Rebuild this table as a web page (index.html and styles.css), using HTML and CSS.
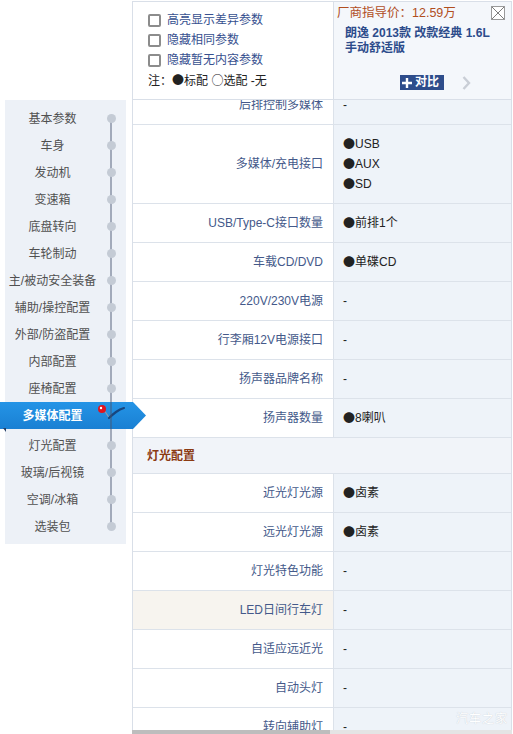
FILE: index.html
```html
<!DOCTYPE html>
<html lang="zh-CN">
<head>
    <meta charset="UTF-8">
    <title>参数配置</title>
    <link rel="stylesheet" href="styles.css">
</head>
<body>
    <nav class="side">
        <ul class="side-list">
            <li class="side-item"><span class="side-text">基本参数</span><i class="dot"></i></li>
            <li class="side-item"><span class="side-text">车身</span><i class="dot"></i></li>
            <li class="side-item"><span class="side-text">发动机</span><i class="dot"></i></li>
            <li class="side-item"><span class="side-text">变速箱</span><i class="dot"></i></li>
            <li class="side-item"><span class="side-text">底盘转向</span><i class="dot"></i></li>
            <li class="side-item"><span class="side-text">车轮制动</span><i class="dot"></i></li>
            <li class="side-item"><span class="side-text">主/被动安全装备</span><i class="dot"></i></li>
            <li class="side-item"><span class="side-text">辅助/操控配置</span><i class="dot"></i></li>
            <li class="side-item"><span class="side-text">外部/防盗配置</span><i class="dot"></i></li>
            <li class="side-item"><span class="side-text">内部配置</span><i class="dot"></i></li>
            <li class="side-item"><span class="side-text">座椅配置</span><i class="dot"></i></li>
            <li class="side-item active">
                <div class="side-band">
                    <span class="side-text">多媒体配置</span>
                    <svg class="pin" width="30" height="20" viewBox="0 0 30 20">
                        <path d="M8 7 L14 16" stroke="#8a98ad" stroke-width="1.2" fill="none"/>
                        <path d="M13 15 Q16 12 20 9 Q24 6 28 5" stroke="#17467f" stroke-width="2.2" fill="none" stroke-linecap="round"/>
                        <circle cx="6" cy="6" r="4" fill="#e0141e"/>
                        <circle cx="5" cy="5" r="1.2" fill="#fff"/>
                    </svg>
                </div>
            </li>
            <li class="side-item"><span class="side-text">灯光配置</span><i class="dot"></i></li>
            <li class="side-item"><span class="side-text">玻璃/后视镜</span><i class="dot"></i></li>
            <li class="side-item"><span class="side-text">空调/冰箱</span><i class="dot"></i></li>
            <li class="side-item"><span class="side-text">选装包</span><i class="dot"></i></li>
        </ul>
    </nav>

    <main class="spec">
        <div class="spec-head">
            <div class="head-opts">
                <label class="opt"><span class="box"></span>高亮显示差异参数</label>
                <label class="opt"><span class="box"></span>隐藏相同参数</label>
                <label class="opt"><span class="box"></span>隐藏暂无内容参数</label>
                <p class="note">注：<span class="b">●</span>标配 <span class="b">○</span>选配 -无</p>
            </div>
            <div class="head-car">
                <div class="price-row">
                    <span class="price">厂商指导价：12.59万</span>
                    <span class="close">
                        <svg width="12" height="12" viewBox="0 0 12 12">
                            <path d="M0 0 L12 12 M12 0 L0 12" stroke="#7d7d7d" stroke-width="1" fill="none"/>
                        </svg>
                    </span>
                </div>
                <p class="car-name">朗逸 2013款 改款经典 1.6L<br>手动舒适版</p>
                <div class="compare-bar">
                    <span class="compare-btn">
                        <svg width="10" height="10" viewBox="0 0 10 10">
                            <path d="M5 0 V10 M0 5 H10" stroke="#fff" stroke-width="2.4"/>
                        </svg>对比</span>
                    <svg class="next" width="9" height="14" viewBox="0 0 9 14">
                        <path d="M1.5 1 L7 7 L1.5 13" stroke="#c9ced6" stroke-width="2.4" fill="none"/>
                    </svg>
                </div>
            </div>
        </div>

        <div class="spec-body">
            <div class="spec-rows">
                <div class="row"><div class="label">后排控制多媒体</div><div class="value">-</div></div>
                <div class="row tall">
                    <div class="label">多媒体/充电接口</div>
                    <div class="value list">
                        <span class="item"><span class="b">●</span>USB</span>
                        <span class="item"><span class="b">●</span>AUX</span>
                        <span class="item"><span class="b">●</span>SD</span>
                    </div>
                </div>
                <div class="row"><div class="label">USB/Type-C接口数量</div><div class="value"><span class="b">●</span>前排1个</div></div>
                <div class="row"><div class="label">车载CD/DVD</div><div class="value"><span class="b">●</span>单碟CD</div></div>
                <div class="row"><div class="label">220V/230V电源</div><div class="value">-</div></div>
                <div class="row"><div class="label">行李厢12V电源接口</div><div class="value">-</div></div>
                <div class="row"><div class="label">扬声器品牌名称</div><div class="value">-</div></div>
                <div class="row"><div class="label">扬声器数量</div><div class="value"><span class="b">●</span>8喇叭</div></div>
                <div class="row section">灯光配置</div>
                <div class="row"><div class="label">近光灯光源</div><div class="value"><span class="b">●</span>卤素</div></div>
                <div class="row"><div class="label">远光灯光源</div><div class="value"><span class="b">●</span>卤素</div></div>
                <div class="row"><div class="label">灯光特色功能</div><div class="value">-</div></div>
                <div class="row"><div class="label hl">LED日间行车灯</div><div class="value">-</div></div>
                <div class="row"><div class="label">自适应远近光</div><div class="value">-</div></div>
                <div class="row"><div class="label">自动头灯</div><div class="value">-</div></div>
                <div class="row"><div class="label">转向辅助灯</div><div class="value">-</div></div>
            </div>
        </div>
        <div class="hscroll"><div class="hscroll-thumb"></div></div>
        <span class="watermark">汽车之家</span>
    </main>
</body>
</html>
```

FILE: styles.css
```css
/* Reset */
* {
    margin: 0;
    padding: 0;
    box-sizing: border-box;
}

body {
    font-family: "Liberation Sans", "Noto Sans CJK SC", sans-serif;
    font-size: 12px;
    line-height: 1.5;
    color: #222;
    background: #fff;
    display: flex;
    align-items: flex-start;
    width: 513px;
    height: 734px;
    overflow: hidden;
}

/* Full-width bullet glyphs */
.b {
    font-family: "Noto Sans CJK SC", sans-serif;
}

/* Left category navigation */
.side {
    position: relative;
    z-index: 5;
    flex-shrink: 0;
    width: 121px;
    margin: 100px 0 0 5px;
    padding: 5px 0 4px;
    background: #edf1f7;
}

.side::before {
    content: "";
    position: absolute;
    left: 105px;
    top: 18px;
    bottom: 18px;
    width: 2px;
    background: rgba(70, 85, 110, 0.45);
    z-index: 2;
}

.side-list {
    list-style: none;
}

.side-item {
    display: flex;
    align-items: center;
    height: 27px;
}

.side-text {
    width: 95px;
    flex-shrink: 0;
    text-align: center;
    color: #505050;
    white-space: nowrap;
}

.dot {
    position: relative;
    z-index: 3;
    flex-shrink: 0;
    width: 9px;
    height: 9px;
    margin-left: 7px;
    border-radius: 50%;
    background: #c4cbd5;
}

.side-item.active {
    position: relative;
    height: 30px;
    align-items: flex-start;
    margin-left: -5px;
}

.side-item.active::after {
    content: "";
    position: absolute;
    left: 3px;
    top: 26px;
    border-top: 4px solid #243f66;
    border-left: 3px solid transparent;
}

.side-band {
    position: relative;
    flex-shrink: 0;
    display: flex;
    align-items: center;
    width: 146px;
    height: 27px;
    padding-left: 5px;
    background: linear-gradient(#2494e6, #1a80d3);
    clip-path: polygon(0 0, 133px 0, 146px 50%, 133px 100%, 0 100%);
}

.side-band .side-text {
    color: #fff;
    font-weight: bold;
}

.pin {
    position: absolute;
    left: 96px;
    top: 1px;
}

/* Spec table */
.spec {
    position: relative;
    flex-shrink: 0;
    width: 380px;
    margin: 1px 0 0 6px;
}

.spec-head {
    display: flex;
    height: 99px;
    border: 1px solid #d9dfe8;
}

.head-opts {
    width: 201px;
    padding: 8px 0 0 15px;
    border-right: 1px solid #d9dfe8;
}

.opt {
    display: flex;
    align-items: center;
    height: 20px;
    color: #36508f;
}

.box {
    width: 13px;
    height: 13px;
    margin-right: 6px;
    border: 2px solid #8c8c8c;
    border-radius: 2px;
    background: #fff;
}

.note {
    line-height: 20px;
    color: #222;
}

.head-car {
    flex: 1;
    padding: 4px 6px 0 3px;
    background: #f4f7fb;
}

.price-row {
    display: flex;
    justify-content: space-between;
    align-items: center;
    height: 14px;
}

.price {
    color: #b14e1e;
    font-size: 12.5px;
}

.close {
    display: flex;
    width: 14px;
    height: 14px;
    border: 1px solid #9a9a9a;
    background: #fff;
}

.car-name {
    margin-top: 6px;
    padding-left: 8px;
    line-height: 15px;
    font-weight: bold;
    color: #2d4c8b;
}

.compare-bar {
    display: flex;
    align-items: center;
    gap: 18px;
    margin-top: 19px;
    padding-left: 63px;
}

.compare-btn {
    display: flex;
    align-items: center;
    gap: 3px;
    height: 15px;
    width: 44px;
    padding-left: 2px;
    background: #2e4d8b;
    color: #fff;
    font-weight: bold;
    line-height: 15px;
}

.spec-body {
    height: 630px;
    overflow: hidden;
    border-left: 1px solid #d9dfe8;
    border-right: 1px solid #d9dfe8;
}

.spec-rows {
    margin-top: -14px;
}

.row {
    display: flex;
    height: 39px;
    border-bottom: 1px solid #dce2ea;
}

.row.tall {
    height: 79px;
}

.label {
    display: flex;
    align-items: center;
    justify-content: flex-end;
    width: 201px;
    flex-shrink: 0;
    padding-right: 10px;
    border-right: 1px solid #dce2ea;
    color: #44598a;
    white-space: nowrap;
}

.label.hl {
    background: #f7f4ef;
}

.value {
    flex: 1;
    display: flex;
    align-items: center;
    padding-left: 9px;
    background: #eef3f9;
    color: #222;
}

.value.list {
    flex-direction: column;
    align-items: flex-start;
    justify-content: center;
}

.value.list .item {
    display: flex;
    align-items: center;
    height: 20px;
}

.row.section {
    height: 36px;
    align-items: center;
    padding-left: 14px;
    background: #f1f4f9;
    color: #8b3a12;
    font-weight: bold;
}

/* Bottom scrollbar strip */
.hscroll {
    height: 4px;
    background: #e4e4e4;
}

.hscroll-thumb {
    width: 198px;
    height: 4px;
    background: #bdbdbd;
}

.watermark {
    position: absolute;
    right: 4px;
    bottom: 6px;
    color: #fff;
    text-shadow: 0 0 1px #b8bfc9;
    letter-spacing: 1px;
}
```
